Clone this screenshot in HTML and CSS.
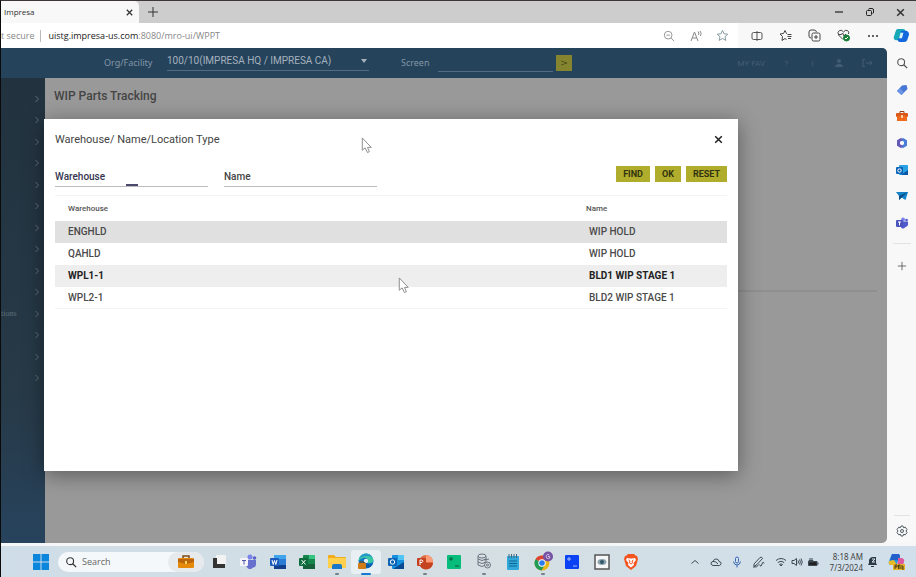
FILE: index.html
```html
<!doctype html>
<html lang="en">
<head>
	<meta charset="UTF-8">
	<title>Impresa</title>
	<link rel="stylesheet" href="styles.css">
</head>
<body>
	<svg class="defs" aria-hidden="true">
		<symbol id="chev" viewBox="0 0 8 8"><path d="M2.5 1 5.5 4 2.5 7" fill="none" stroke="currentColor"/></symbol>
		<symbol id="cross" viewBox="0 0 10 10"><path d="M2 2 8 8M8 2 2 8" fill="none" stroke="currentColor" stroke-width="1.4"/></symbol>
		<symbol id="plus" viewBox="0 0 12 12"><path d="M6 1V11M1 6H11" fill="none" stroke="currentColor"/></symbol>
		<symbol id="lens" viewBox="0 0 14 14"><circle cx="6" cy="6" r="4" fill="none" stroke="currentColor" stroke-width="1.3"/><path d="M9 9 13 13" stroke="currentColor" stroke-width="1.5"/></symbol>
		<symbol id="cursor" viewBox="0 0 12 18"><path d="M1 1V14L4 11.5 6.5 16.5 8.5 15.5 6.5 11H10.500Z" fill="#fff" stroke="#888"/></symbol>
		<symbol id="copilot" viewBox="0 0 18 18">
			<path d="M5 2H11Q13 2 13.500 5L11 13Q10 15 7 14H3Q0 13 1 10L3 4Q3.500 2 5 2Z" fill="#17a8b8"/>
			<path d="M8 4H14Q17 5 17 8L15 14Q14 16 11 16H7Q5 16 5 12Q8 13 9 9Z" fill="#1267dd"/>
			<path d="M8 6H11L9.500 12H6.500Z" fill="#d7f2fa"/>
		</symbol>
	</svg>

	<header class="tabs">
		<div class="tab"><span>Impresa</span><button aria-label="Close tab"><svg width="9" height="9"><use href="#cross"/></svg></button></div>
		<button class="new_tab" aria-label="New tab"><svg width="12" height="12"><use href="#plus"/></svg></button>
		<div class="win_btns">
			<button aria-label="Minimize"><svg width="10" height="10"><path d="M1 5H9" stroke="#222" stroke-width="1.2"/></svg></button>
			<button aria-label="Restore"><svg width="10" height="10" fill="none" stroke="#222"><rect x="1.500" y="3.500" width="5" height="5" rx="1"/><path d="M3.500 2.500Q3.500 1.500 5 1.500H7Q8.500 1.500 8.500 3V5Q8.500 6.500 7.500 6.500"/></svg></button>
			<button aria-label="Close"><svg width="11" height="11"><use href="#cross"/></svg></button>
		</div>
	</header>

	<div class="address">
		<div class="url"><span class="secure">t secure</span><span class="host">uistg.impresa-us.com</span><span class="path">:8080/mro-ui/WPPT</span></div>
		<div class="page_tools">
			<button aria-label="Zoom out"><svg width="12" height="12" viewBox="0 0 14 14" fill="none" stroke="#888"><circle cx="6" cy="6" r="4.500"/><path d="M4 6H8M9.500 9.500 13 13"/></svg></button>
			<button aria-label="Read aloud"><svg width="12" height="12" fill="none" stroke="#888"><path d="M1 11 4.500 2 8 11M2.300 8H6.700M8 1.500Q9.500 3 8.500 5M10 1Q12 3 10.500 6"/></svg></button>
			<button aria-label="Favorite"><svg width="13" height="13" viewBox="0 0 14 14" fill="none" stroke="#7d959c"><path d="M7 1.500 8.700 5.200 12.700 5.600 9.700 8.300 10.600 12.300 7 10.200 3.400 12.300 4.300 8.300 1.300 5.600 5.300 5.200Z"/></svg></button>
		</div>
		<div class="browser_tools">
			<button aria-label="Split screen"><svg width="12" height="12" fill="none" stroke="#555"><rect x="1" y="2.500" width="10" height="7" rx="1.500"/><path d="M6 1V11"/></svg></button>
			<button aria-label="Favorites"><svg width="13" height="13" fill="none" stroke="#444"><path d="M8 4.500H7.500L6 1.500 4.500 4.500 1 5 3.500 7.500 3 11.500 6 9.500 7.500 10.500M8.500 5.500H12.500M8.500 7.500H12.500M9 9.500H12"/></svg></button>
			<button aria-label="Collections"><svg width="13" height="13" fill="none" stroke="#444"><path d="M3 9Q1 9 1 7V3Q1 1 3 1H6Q8 1 8.500 3"/><rect x="4" y="4" width="8" height="8" rx="1.500"/><path d="M8 6V10M6 8H10"/></svg></button>
			<button aria-label="Browser essentials"><svg width="14" height="13" fill="none" stroke="#444"><path d="M6 10.500 1.500 6Q0 3 2.500 1.500 5 .5 6.500 3 8 .5 10.500 1.500 12.500 3 11.500 5M2 5.500H4.500L5.500 4 7 7 8 5.500H9"/><circle cx="9.500" cy="9" r="3" fill="#188038" stroke="#188038"/><path d="M8 9 9 10 11 8" stroke="#fff"/></svg></button>
			<button aria-label="More"><svg width="12" height="4" fill="#333"><circle cx="2" cy="2" r="1"/><circle cx="6" cy="2" r="1"/><circle cx="10" cy="2" r="1"/></svg></button>
			<button aria-label="Copilot"><svg width="17" height="17"><use href="#copilot"/></svg></button>
		</div>
	</div>

	<main class="main">
		<div class="app">
			<div class="app_bar">
				<label class="org_label" for="org">Org/Facility</label>
				<div class="select_box"><select id="org"><option>100/10(IMPRESA HQ / IMPRESA CA)</option></select></div>
				<label class="screen_label" for="screen">Screen</label>
				<input id="screen" type="text">
				<button class="go" aria-label="Go"><svg width="8" height="8"><path d="M1 2 7 4 1 6" fill="none" stroke="#53551b"/></svg></button>
				<nav class="app_links">
					<a href="#">MY FAV</a>
					<a href="#">?</a>
					<a href="#">i</a>
					<a href="#" aria-label="User"><svg width="10" height="10" fill="currentColor"><circle cx="5" cy="3" r="2"/><path d="M1 9Q1 6 5 6T9 9Z"/></svg></a>
					<a href="#" aria-label="Sign out"><svg width="12" height="10" fill="none" stroke="currentColor"><path d="M4 1.500H2V8.500H4M5 5H11M9 3 11 5 9 7"/></svg></a>
				</nav>
			</div>
			<div class="app_body">
				<nav class="side">
					<ul>
						<li><svg><use href="#chev"/></svg></li>
						<li><svg><use href="#chev"/></svg></li>
						<li><svg><use href="#chev"/></svg></li>
						<li><svg><use href="#chev"/></svg></li>
						<li><svg><use href="#chev"/></svg></li>
						<li><svg><use href="#chev"/></svg></li>
						<li><svg><use href="#chev"/></svg></li>
						<li><svg><use href="#chev"/></svg></li>
						<li><svg><use href="#chev"/></svg></li>
						<li><svg><use href="#chev"/></svg></li>
						<li><span>tions</span><svg><use href="#chev"/></svg></li>
						<li><svg><use href="#chev"/></svg></li>
						<li><svg><use href="#chev"/></svg></li>
						<li><svg><use href="#chev"/></svg></li>
					</ul>
				</nav>
				<section class="content">
					<h1>WIP Parts Tracking</h1>
					<div class="panel"></div>
				</section>
			</div>

			<div class="modal" role="dialog" aria-labelledby="modal_title">
				<div class="modal_head">
					<h2 id="modal_title">Warehouse/ Name/Location Type</h2>
					<button class="close" aria-label="Close dialog"><svg width="11" height="11"><use href="#cross"/></svg></button>
				</div>
				<form class="filters">
					<div class="field field_active"><label for="warehouse">Warehouse</label><input id="warehouse" type="text"></div>
					<div class="field"><label for="name">Name</label><input id="name" type="text"></div>
					<div class="actions">
						<button type="button">FIND</button>
						<button type="button">OK</button>
						<button type="button">RESET</button>
					</div>
				</form>
				<table class="list">
					<thead><tr><th>Warehouse</th><th>Name</th></tr></thead>
					<tbody>
						<tr class="selected"><td>ENGHLD</td><td>WIP HOLD</td></tr>
						<tr><td>QAHLD</td><td>WIP HOLD</td></tr>
						<tr class="hover"><td>WPL1-1</td><td>BLD1 WIP STAGE 1</td></tr>
						<tr class="last"><td>WPL2-1</td><td>BLD2 WIP STAGE 1</td></tr>
					</tbody>
				</table>
			</div>
			<svg class="cursor cursor_top"><use href="#cursor"/></svg>
			<svg class="cursor cursor_row"><use href="#cursor"/></svg>
		</div>

		<aside class="rail">
			<div class="rail_apps">
				<button aria-label="Search"><svg width="12" height="12" color="#555"><use href="#lens"/></svg></button>
				<button aria-label="Shopping"><svg width="12" height="12"><path d="M6 1.500 10.500 1 11.500 5 5.500 11 1 7Z" fill="#4777d4"/><path d="M1 7 5.500 11 8 8.500 4 4Z" fill="#6b94e5"/></svg></button>
				<button aria-label="Tools"><svg width="12" height="12"><path d="M4 3V1.500H8V3" fill="none" stroke="#8d4216"/><rect y="3" width="12" height="4" rx="1" fill="#d9581a"/><rect x="1" y="6" width="10" height="5" fill="#ef6a1c"/><rect x="5" y="5" width="2" height="3" fill="#ffd09a"/></svg></button>
				<button aria-label="Microsoft 365"><svg width="12" height="12" fill="none" stroke-width="3"><path d="M6 2 9.500 4V8L6 10" stroke="#4a7fd8"/><path d="M6 10 2.500 8V4L6 2" stroke="#6559b8"/></svg></button>
				<button aria-label="Outlook"><svg width="12" height="12"><rect x="3" y="1" width="9" height="10" rx="1" fill="#28a1e4"/><path d="M5 11 12 6V11Z" fill="#0a57a8"/><rect y="3" width="7" height="7" rx="1" fill="#0b65b8"/><circle cx="3.500" cy="6.500" r="1.700" fill="none" stroke="#fff"/></svg></button>
				<button aria-label="Drop"><svg width="12" height="12"><path d="M0 2H12L9.500 10 5.500 7.500 3 10V6Z" fill="#1583c8"/><path d="M3 6 12 2 5.500 7.500 3 10Z" fill="#0b4b85"/></svg></button>
				<button aria-label="Teams"><svg width="12" height="12"><circle cx="7" cy="2.500" r="2" fill="#7b83eb"/><circle cx="10.500" cy="3" r="1.300" fill="#5059c9"/><path d="M4 4.500H12V8Q11 10 9.500 10 8 12 6 11.500L4 9Z" fill="#5059c9"/><rect y="3" width="7" height="7" rx="1" fill="#4b53bc"/><path d="M2 5H5M3.500 5V8.500" stroke="#fff"/></svg></button>
			</div>
			<div class="rail_add"><button aria-label="Add"><svg width="10" height="10" color="#555"><use href="#plus" /></svg></button></div>
			<div class="rail_bottom"><button aria-label="Settings"><svg width="12" height="12" fill="none" stroke="#4d5a60"><path d="M5 1H7L7.500 2.700 9.300 2.200 11 4.500 10 6 11 7.500 9.300 9.800 7.500 9.300 7 11H5L4.500 9.300 2.700 9.800 1 7.500 2 6 1 4.500 2.700 2.200 4.500 2.700Z"/><circle cx="6" cy="6" r="1.500"/></svg></button></div>
		</aside>
	</main>

	<footer class="taskbar">
		<button class="start" aria-label="Start"><svg width="16" height="16" fill="#0b86dc"><rect width="7.500" height="7.500"/><rect x="8.500" width="7.500" height="7.500"/><rect y="8.500" width="7.500" height="7.500"/><rect x="8.500" y="8.500" width="7.500" height="7.500"/></svg></button>
		<div class="search">
			<svg width="12" height="12" color="#333"><use href="#lens"/></svg>
			<input type="text" placeholder="Search" aria-label="Search">
			<span class="search_pic"><svg width="16" height="14"><path d="M5 3V1H11V3" fill="none" stroke="#7d4b12" stroke-width="1.500"/><rect y="3" width="16" height="10" rx="1" fill="#e58a0b"/><path d="M0 4H16V7L8 9 0 7Z" fill="#b9650b"/><rect x="7" y="6" width="2" height="3" fill="#ffd45a"/></svg></span>
		</div>
		<div class="apps">
			<button aria-label="Task view"><svg width="16" height="16"><rect x="5" y="1" width="10" height="9" fill="#f2f2f2"/><path d="M2 4H6V10H14V14H2Z" fill="#333"/></svg></button>
			<button aria-label="Teams"><svg width="18" height="16"><circle cx="11" cy="3" r="2.500" fill="#7b83eb"/><circle cx="15.500" cy="4" r="1.800" fill="#5b63c9"/><path d="M7 6H17V11Q16 14 14 13.500 12 16 9 14.500L7 12Z" fill="#6870cf"/><rect x="1" y="4" width="8" height="8" rx="1" fill="#f4f4fa"/><path d="M3 6.500H7M5 6.500V10.500" stroke="#5059a9"/></svg></button>
			<button aria-label="Word"><svg width="16" height="16"><rect x="4" y="1" width="12" height="14" rx="1" fill="#2b7cd3"/><path d="M4 1H16V5H4Z" fill="#41a5ee"/><path d="M4 11H16V15H4Z" fill="#123f8c"/><rect y="4" width="9" height="8" rx="1" fill="#1b5bbd"/><path d="M2 6 3.200 10.500 4.500 6.500 5.800 10.500 7 6" fill="none" stroke="#fff"/></svg></button>
			<button aria-label="Excel"><svg width="16" height="16"><rect x="4" y="1" width="12" height="14" rx="1" fill="#17864c"/><path d="M10 1H16V5H10Z" fill="#33c481"/><path d="M4 10H16V15H4Z" fill="#15603a"/><rect y="4" width="9" height="8" rx="1" fill="#0e6b3b"/><path d="M2.500 6 6.500 10.500M6.500 6 2.500 10.500" stroke="#fff"/></svg></button>
			<button class="open" aria-label="File Explorer"><svg width="18" height="16"><path d="M0 2Q0 1 1 1H6L8 3H17Q18 3 18 4V14H0Z" fill="#f0ad1e"/><rect y="4" width="18" height="10" rx="1" fill="#ffd04b"/><path d="M4 15V12Q4 10 6 10H12Q14 10 14 12V15Z" fill="#1877c9"/></svg></button>
			<button class="open current" aria-label="Edge"><svg width="18" height="17"><circle cx="9" cy="8" r="7.500" fill="#1377c8"/><path d="M1.500 8Q2 1 9 .5 16 1 16.500 8 16 10 12 10 10 10 11 8 10 4 6 5 3 6 1.500 8Z" fill="#3cc7a4"/><path d="M2 6Q5 0 11 1 14 2 15 4 9 2 5 4 3 5 2 6Z" fill="#2796cb"/><circle cx="9" cy="8" r="2.200" fill="#e6f3f6"/><path d="M9 10Q12 13 16 10 14 15 9 15 6 12 7 9Z" fill="#0c59a4"/><rect x="1" y="10" width="8" height="6" rx="1" fill="#d17b17"/><path d="M3 10V9H7V10" fill="none" stroke="#744311"/></svg></button>
			<button aria-label="Outlook"><svg width="16" height="16"><rect x="4" y="1" width="12" height="14" rx="1" fill="#1490df"/><path d="M10 1H16V6H10Z" fill="#50c5f5"/><path d="M5 15 16 8V15Z" fill="#0a4a91"/><rect y="4" width="9" height="8" rx="1" fill="#0c63b5"/><circle cx="4.500" cy="8" r="2.200" fill="none" stroke="#fff"/></svg></button>
			<button class="open" aria-label="PowerPoint"><svg width="16" height="16"><circle cx="9" cy="8" r="7" fill="#e06b43"/><path d="M9 1A7 7 0 0 1 16 8H9Z" fill="#ff9c78"/><path d="M2 9H16A7 7 0 0 1 3 12Z" fill="#c5431f"/><rect y="4" width="9" height="8" rx="1" fill="#c34220"/><path d="M3 11V6H5Q7 7.300 5 8.500H3" fill="none" stroke="#fff"/></svg></button>
			<button aria-label="Remote tool"><svg width="16" height="16"><rect x="1" y="1" width="14" height="14" rx="1" fill="#08bd7c"/><path d="M3 5H7M5 3V7M9 12H13" stroke="#075b3d"/></svg></button>
			<button class="open" aria-label="Database"><svg width="16" height="17" fill="#d9dee3" stroke="#68737e"><path d="M2 3V12Q6 15 10 12V3"/><ellipse cx="6" cy="3" rx="4" ry="2"/><path d="M2 6Q6 9 10 6M2 9Q6 12 10 9" fill="none"/><circle cx="11.500" cy="12" r="3"/><circle cx="11.500" cy="12" r="1"/><path d="M8 7 13 6" /></svg></button>
			<button aria-label="Notepad"><svg width="14" height="16"><rect x="1" y="2" width="12" height="14" rx="1" fill="#31a8dc"/><path d="M3 0V4M5.500 0V4M8 0V4M10.500 0V4" stroke="#47697a"/><path d="M3 7H11M3 9.500H11M3 12H11" stroke="#0d668f"/></svg></button>
			<button class="open" aria-label="Chrome"><svg width="20" height="22"><circle cx="9" cy="12" r="7.500" fill="#e8b51b"/><path d="M9 12 2.500 8.200A7.500 7.500 0 0 1 15.500 8.200Z" fill="#dc4437"/><path d="M2.500 8.200A7.500 7.500 0 0 0 8.500 19.500L12 13.500 9 12Z" fill="#239b56"/><circle cx="9" cy="12" r="3.700" fill="#fff"/><circle cx="9" cy="12" r="2.800" fill="#287be8"/><circle cx="15" cy="5.500" r="5" fill="#7652a4"/><path d="M16.500 4Q13.500 2.500 13.200 5.500 13.500 8.500 16.700 7V5.500H15" fill="none" stroke="#d8c9e8"/></svg></button>
			<button aria-label="Remote desktop"><svg width="16" height="16"><rect x="1" y="1" width="14" height="14" rx="1" fill="#0b42f4"/><path d="M3 5H7M5 3V7M9 12H13" stroke="#a8bfff"/></svg></button>
			<button aria-label="Viewer"><svg width="16" height="16"><rect x="1" y="1" width="14" height="14" fill="#f5f6f7" stroke="#555" stroke-width="1.500"/><ellipse cx="8" cy="8" rx="4.500" ry="3" fill="#8ba2ad"/><circle cx="8" cy="8" r="2" fill="#31566a"/></svg></button>
			<button aria-label="Brave"><svg width="14" height="16"><path d="M4 0H10L11.500 1.500 13 2 14 5 12 12 7 16 2 12 0 5 1 2 2.500 1.500Z" fill="#f4541f"/><path d="M3 4 6 4.500H8L11 4 12 6 9.500 9 10 11 7 13.500 4 11 4.500 9 2 6Z" fill="#fff"/><path d="M4.500 6 6 7 5.500 9 7 10 8.500 9 8 7 9.500 6" fill="none" stroke="#f4541f"/></svg></button>
		</div>
		<div class="tray">
			<svg width="10" height="10"><path d="M1.500 6.500 5 3.500 8.500 6.500"/></svg>
			<svg width="12" height="10"><path d="M3 8.500Q.7 8 1 6 1.500 4.500 3 4.500 4 1.500 6.500 2 8.500 2 9 4.500 11 4.500 11 6.500 11 8 9.500 8.500ZM3 4.500Q6 4 8 7"/></svg>
			<svg width="10" height="12" class="mic"><rect x="3.500" y="1" width="3" height="6" rx="1.500"/><path d="M1.500 5.500Q2 9 5 9T8.500 5.500M5 9V11.500"/></svg>
			<svg width="13" height="12"><path d="M2 8 8 1.500Q10 .5 10.500 2.500L5 8.500 2 10.500ZM1 11Q5 11.500 6 9.500T8 9.500 10 8 12 7.500"/></svg>
		</div>
		<div class="tray status">
			<svg width="12" height="10"><path d="M1 3.500Q6-.5 11 3.500M2.800 5.500Q6 3 9.200 5.500M4.500 7.500Q6 6.300 7.500 7.500L6 9Z"/></svg>
			<svg width="12" height="10"><path d="M1 3.500H3L5.500 1.500V8.500L3 6.500H1ZM7 3.500Q8 5 7 6.500M8.500 2.500Q10.300 5 8.500 7.500M10 1.500Q12.500 5 10 8.500"/></svg>
			<svg width="12" height="10"><path d="M1.500 4.500H10V8.500H1.500ZM11 5.500V7.500M3 1V3M5 1V3M2 3.500H6V5H2Z" fill="#222"/></svg>
		</div>
		<div class="clock"><time>8:18 AM</time><time>7/3/2024</time></div>
		<button class="bell" aria-label="Notifications"><svg width="11" height="12"><path d="M1 9 2 7V4Q3 1 6 1H9V7L10 9Z" fill="#2c3b45"/><path d="M4 10.500H7" stroke="#2c3b45"/><path d="M5 3H8L5 6H8" fill="none" stroke="#dbe5ec"/></svg></button>
		<button class="copilot" aria-label="Copilot"><svg width="17" height="17"><path d="M4 1H10Q12 1 12 4L8 12H3Q0 12 1 8Z" fill="#1b98df"/><path d="M4 1H10Q12 1 12 4L10 7H2Z" fill="#2460ca"/><path d="M1 8 6 7 9 12H3Q0 12 1 8Z" fill="#e9ba28"/><path d="M10 5H14Q17 6 16 9L14 15H8L10 8Z" fill="#dd5a9e"/><rect x="5" y="11" width="12" height="6" fill="#e9b328"/><path d="M7 16V12H9V14H7M10.500 16V12H12V16M14 12V16H16M14 14H16" fill="none" stroke="#493c16"/></svg></button>
	</footer>
</body>
</html>
```
FILE: styles.css
```css
*{
	box-sizing: border-box;
}
body, h1, h2, ul, li{
	margin: 0;
	padding: 0;
}
body{
	display: flex;
	flex-direction: column;
	min-height: 100vh;
	border-top: 1px solid #3c3638;
	border-left: 1px solid #0b0b0b;
	font-family: Roboto, "Liberation Sans", sans-serif;
	font-size: 10px;
	color: #444;
	background-color: #f8f8f8;
}
ul{
	list-style: none;
}
button{
	display: flex;
	align-items: center;
	justify-content: center;
	padding: 0;
	border: 0;
	background: none;
	color: inherit;
	font-family: inherit;
}
input, select{
	min-width: 0;
	padding: 0;
	border: 0;
	border-radius: 0;
	outline: 0;
	background: none;
	font-family: inherit;
}
svg{
	flex: none;
}
.defs{
	position: absolute;
	width: 0;
	height: 0;
}

/* browser */
.tabs{
	display: flex;
	height: 22px;
	background-color: #cdcdcd;
	color: #333;
}
.tab{
	display: flex;
	align-items: center;
	justify-content: space-between;
	width: 138px;
	padding: 0 5px 0 3px;
	border-radius: 0 5px 0 0;
	background-color: #f8f8f8;
	font: 8px/12px "Open Sans", sans-serif;
}
.new_tab{
	width: 28px;
}
.win_btns{
	display: flex;
	margin-left: auto;
}
.win_btns button{
	width: 31px;
}
.address{
	display: flex;
	align-items: center;
	height: 25px;
}
.url{
	display: flex;
	flex: 1;
	align-self: stretch;
	align-items: center;
	background-color: #fff;
	font: 9px/12px "Open Sans", sans-serif;
	color: #888;
	white-space: nowrap;
}
.secure{
	margin-right: 7px;
	padding-right: 6px;
	border-right: 1px solid #bbb;
}
.host{
	color: #222;
}
.page_tools{
	display: flex;
	align-self: stretch;
	padding-right: 2px;
	background-color: #fff;
}
.page_tools button{
	width: 27px;
}
.browser_tools{
	display: flex;
	padding-left: 4px;
}
.browser_tools button{
	width: 29px;
}
.main{
	display: flex;
	flex: 1;
}

/* application */
.app{
	position: relative;
	display: flex;
	flex: 1;
	flex-direction: column;
	overflow: hidden;
	border-radius: 0 5px 5px 0;
	background-color: #999;
}
.app_bar{
	display: flex;
	align-items: center;
	height: 30px;
	padding-left: 103px;
	background-color: #26435c;
	color: #8296a6;
}
.org_label, .screen_label{
	font: 9px/12px "Noto Sans", sans-serif;
}
.org_label{
	width: 63px;
}
.select_box{
	display: flex;
	align-items: center;
	width: 202px;
	height: 20px;
	margin-bottom: 4px;
	border-bottom: 1px solid #526b80;
}
.select_box select{
	flex: 1;
	appearance: none;
	font-size: 10px;
	color: #a5b2bd;
}
.select_box::after{
	content: '';
	margin-right: 2px;
	border: 3px solid transparent;
	border-top: 4px solid #a5b2bd;
	border-bottom: 0;
}
.screen_label{
	width: 37px;
	margin-left: 32px;
}
#screen{
	width: 115px;
	height: 18px;
	border-bottom: 1px solid #526b80;
}
.go{
	width: 16px;
	height: 16px;
	margin-left: 3px;
	background-color: #85852f;
}
.app_links{
	display: flex;
	align-items: center;
	margin-left: auto;
	padding-right: 14px;
	gap: 17px;
}
.app_links a{
	display: flex;
	justify-content: center;
	min-width: 9px;
	font-size: 8px;
	text-decoration: none;
	color: #425d73;
}
.app_body{
	display: flex;
	flex: 1;
}
.side{
	width: 44px;
	padding-top: 10px;
	background: linear-gradient(#22323f, #273a48 70%, #27435d);
	color: #5f6e79;
}
.side ul{
	display: flex;
	flex-direction: column;
	height: 301px;
}
.side li{
	display: flex;
	flex: 1;
	align-items: center;
	justify-content: flex-end;
	padding-right: 4px;
}
.side span{
	margin-right: auto;
	font: 8px "Liberation Serif", serif;
}
.side svg{
	width: 8px;
	height: 8px;
}
.content{
	display: flex;
	flex: 1;
	flex-direction: column;
	padding: 10px 10px 0 9px;
}
.content h1{
	font-size: 12px;
	line-height: 16px;
	font-weight: 500;
	color: #444;
}
.panel{
	height: 188px;
	border-bottom: 2px solid #8f8f8f;
}

/* dialog */
.modal{
	position: absolute;
	top: 71px;
	right: 149px;
	left: 43px;
	min-height: 352px;
	padding: 0 11px;
	background-color: #fff;
	box-shadow: 0 4px 20px rgba(0, 0, 0, .4);
}
.modal_head{
	display: flex;
	align-items: center;
	justify-content: space-between;
	height: 40px;
}
.modal_head h2{
	font-size: 11px;
	font-weight: 400;
	color: #444;
}
.close{
	width: 18px;
	height: 18px;
	color: #222;
}
.filters{
	display: flex;
	gap: 16px;
	height: 36px;
	padding-top: 7px;
}
.field{
	display: grid;
	width: 153px;
	height: 21px;
	border-bottom: 1px solid #bbb;
}
.field label, .field input{
	grid-area: 1 / 1;
}
.field label{
	align-self: end;
	padding-bottom: 2px;
	font-weight: 500;
	line-height: 14px;
	color: #444;
}
.field_active label{
	color: #34344f;
}
.field_active::after{
	content: '';
	grid-area: 1 / 1;
	align-self: end;
	justify-self: center;
	width: 12px;
	height: 2px;
	background-color: #4a4a70;
}
.actions{
	display: flex;
	align-items: flex-start;
	gap: 5px;
	margin-left: auto;
}
.actions button{
	height: 16px;
	padding: 0 7px;
	background-color: #b0ad2c;
	font-size: 9px;
	font-weight: 700;
	color: #33330f;
}
.list{
	width: 100%;
	table-layout: fixed;
	border-collapse: collapse;
	text-align: left;
}
.list th{
	height: 25px;
	padding: 0 13px;
	border-top: 1px solid #f4f4f4;
	font-size: 8px;
	font-weight: 500;
	color: #555;
}
.list th:last-child{
	width: 154px;
}
.list td{
	height: 22px;
	padding: 0 13px;
	font-weight: 500;
	color: #4a4a4a;
}
.list td:last-child{
	padding-left: 16px;
}
.list .selected{
	background-color: #e0e0e0;
}
.list .hover{
	background-color: #eee;
}
.list .hover td{
	font-weight: 700;
	color: #222;
}
.list .last{
	border-bottom: 1px solid #f4f4f4;
}
.cursor{
	position: absolute;
	width: 12px;
	height: 17px;
}
.cursor_top{
	top: 89px;
	left: 360px;
}
.cursor_row{
	top: 229px;
	left: 397px;
}

/* edge sidebar */
.rail{
	display: flex;
	flex-direction: column;
	align-items: center;
	width: 29px;
	color: #555;
}
.rail_apps{
	display: flex;
	flex-direction: column;
	height: 196px;
	padding: 2px 3px 7px;
	border-bottom: 1px solid #e2e2e2;
}
.rail_apps button{
	flex: 1;
}
.rail_add{
	padding-top: 17px;
}
.rail_bottom{
	margin-top: auto;
	padding: 9px 2px 6px;
	border-top: 1px solid #e2e2e2;
}

/* taskbar */
.taskbar{
	display: flex;
	align-items: center;
	height: 34px;
	padding: 0 11px 0 32px;
	border-top: 3px solid #f4f6f8;
	background: linear-gradient(90deg, #cfdde8, #d5dfe3 50%, #d0dfeb);
	color: #444;
}
.start{
	width: 16px;
}
.search{
	display: flex;
	align-items: center;
	width: 146px;
	height: 20px;
	margin-left: 9px;
	padding-left: 7px;
	border-radius: 10px;
	background-color: #f5f8fa;
}
.search input{
	flex: 1;
	padding-left: 5px;
	font: 9px/12px "Open Sans", sans-serif;
}
.search input::placeholder{
	color: #666;
}
.search_pic{
	display: flex;
	align-items: center;
	justify-content: center;
	width: 36px;
	height: 20px;
	border-radius: 10px;
	background-color: #e6eaed;
}
.apps{
	display: flex;
	width: 442px;
}
.apps button{
	position: relative;
	flex: 1;
	height: 24px;
}
.apps .current{
	border-radius: 3px;
	background-color: #e9f0f3;
}
.open::after{
	content: '';
	position: absolute;
	bottom: -1px;
	width: 4px;
	height: 2px;
	border-radius: 1px;
	background-color: #76818a;
}
.current::after{
	width: 10px;
	background-color: #1b78d0;
}
.tray{
	display: flex;
	align-items: center;
	gap: 10px;
	margin-left: auto;
	fill: none;
	stroke: #3c4a54;
}
.mic{
	stroke: #3a68b5;
}
.status{
	gap: 4px;
	margin-left: 10px;
}
.clock{
	display: flex;
	flex-direction: column;
	width: 44px;
	font: 8px/11px "Noto Sans", sans-serif;
	text-align: right;
	white-space: nowrap;
}
.bell{
	margin-left: 4px;
}
.copilot{
	margin-left: 10px;
}
```
